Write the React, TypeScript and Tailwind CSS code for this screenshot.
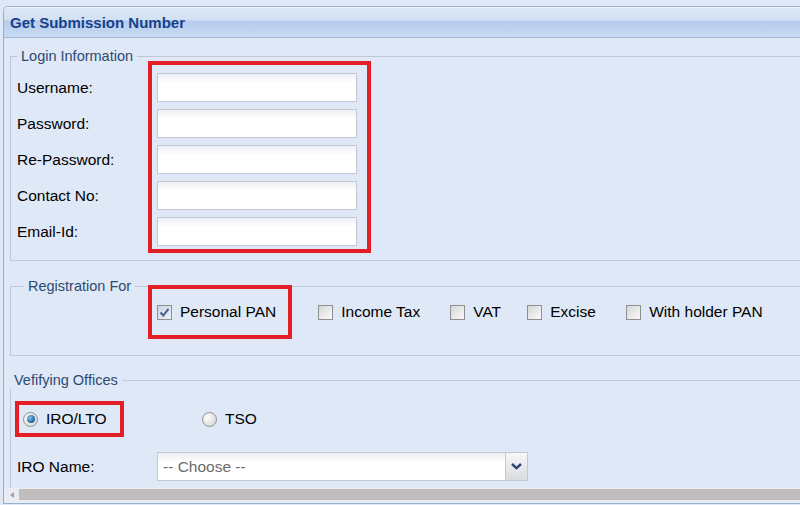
import React from "react";

const loginFields = ["Username:", "Password:", "Re-Password:", "Contact No:", "Email-Id:"];

const otherTypes = [
  { label: "Income Tax", width: "w-[132px]" },
  { label: "VAT", width: "w-[77px]" },
  { label: "Excise", width: "w-[99px]" },
  { label: "With holder PAN", width: "" },
];

function CheckBox({ checked = false }: { checked?: boolean }) {
  return (
    <span
      className={
        "flex h-[15px] w-[15px] shrink-0 items-center justify-center border border-[#8e8f8f] " +
        (checked
          ? "bg-[linear-gradient(135deg,#c9d3e3,#eef2f8)]"
          : "bg-[linear-gradient(135deg,#d6d6d6,#fafafa)]")
      }
    >
      {checked && (
        <svg width="11" height="11" viewBox="0 0 11 11">
          <path d="M1.5 5.5 L4.3 8.5 L9.5 1.8" fill="none" stroke="#4b5f8c" strokeWidth="2" />
        </svg>
      )}
    </span>
  );
}

function Radio({ checked = false }: { checked?: boolean }) {
  return (
    <span className="flex h-[15px] w-[15px] shrink-0 items-center justify-center rounded-full border border-[#8f8f8f] bg-[radial-gradient(circle_at_35%_35%,#fdfdfd,#cfcfcf)]">
      {checked && (
        <span className="h-[8px] w-[8px] rounded-full bg-[radial-gradient(circle_at_35%_35%,#8cc4ee,#1f5f99_70%)]" />
      )}
    </span>
  );
}

function TextField() {
  return (
    <div className="h-[29px] w-[200px] border border-[#c3c7d1] bg-[linear-gradient(to_bottom,#eceef2,#ffffff_9px)]" />
  );
}

export default function App() {
  return (
    <div className="h-[505px] w-[800px] overflow-hidden bg-[#dfe8f6] pl-[3px] pt-[6px] font-['Liberation_Sans',Arial,sans-serif] text-[15.5px] text-black">
      <div className="flex h-[498px] w-[830px] flex-col rounded-tl-[5px] border-b border-l border-t border-[#99afd0]">
        {/* Header */}
        <div className="flex h-[31px] shrink-0 items-center rounded-tl-[4px] border-b border-[#a4b8d8] bg-[linear-gradient(to_bottom,#ffffff_0px,#dce7f6_1px,#d3e0f3_13px,#b6ccee_14px,#c8d9f1_30px)] pl-[6px] pt-[2px]">
          <span className="text-[15px] font-bold text-[#15428b]">Get Submission Number</span>
        </div>

        {/* Body */}
        <div className="min-h-0 flex-1 overflow-hidden pl-[6px]">
          {/* Login Information */}
          <fieldset className="mt-[9px] border border-[#bfc8d6] pb-[7px] pl-[6px]">
            <legend className="px-[4px] text-[14.5px] leading-[18px] text-[#2d4a73]">Login Information</legend>
            <div className="flex items-start">
              <div className="mt-[8px] flex w-[131px] flex-col gap-[7px]">
                {loginFields.map((f) => (
                  <div key={f} className="flex h-[29px] items-center">
                    {f}
                  </div>
                ))}
              </div>
              <div className="-mt-[4px] flex flex-col gap-[7px] border-4 border-[#e41e26] pb-[3px] pl-[5px] pr-[10px] pt-[8px]">
                {loginFields.map((f) => (
                  <TextField key={f} />
                ))}
              </div>
            </div>
          </fieldset>

          {/* Registration For */}
          <fieldset className="mt-[16px] border border-[#bfc8d6] pb-[16px] pl-[6px]">
            <legend className="ml-[7px] px-[4px] text-[14.5px] leading-[18px] text-[#2d4a73]">Registration For</legend>
            <div className="flex items-center">
              <div className="-mt-[10px] ml-[131px] flex h-[54px] items-center gap-[8px] border-4 border-[#e41e26] pl-[5px] pr-[12px]">
                <CheckBox checked />
                <span>Personal PAN</span>
              </div>
              <div className="-mt-[10px] ml-[26px] flex items-center">
                {otherTypes.map((t) => (
                  <div key={t.label} className={"flex items-center gap-[8px] " + t.width}>
                    <CheckBox />
                    <span>{t.label}</span>
                  </div>
                ))}
              </div>
            </div>
          </fieldset>

          {/* Verifying Offices */}
          <fieldset className="mt-[15px] border border-[#bfc8d6] pb-[20px] pl-[6px]">
            <legend className="-ml-[7px] px-[4px] text-[14.5px] leading-[18px] text-[#2d4a73]">Vefifying Offices</legend>
            <div className="mt-[12px] flex items-center">
              <div className="-ml-[2px] flex h-[36px] w-[109px] items-center gap-[8px] border-4 border-[#e41e26] pl-[4px]">
                <Radio checked />
                <span>IRO/LTO</span>
              </div>
              <div className="ml-[78px] flex items-center gap-[8px]">
                <Radio />
                <span>TSO</span>
              </div>
            </div>
            <div className="mt-[15px] flex items-center">
              <div className="w-[140px]">IRO Name:</div>
              <div className="flex h-[29px] w-[371px]">
                <div className="flex flex-1 items-center border border-[#c3c7d1] bg-[linear-gradient(to_bottom,#eceef2,#ffffff_9px)] pl-[5px] text-[#6b6b6b]">
                  -- Choose --
                </div>
                <div className="flex w-[22px] items-center justify-center border border-l-0 border-[#c3c7d1] bg-[linear-gradient(to_bottom,#f7f7f7,#d9dbe0)]">
                  <svg width="11" height="7" viewBox="0 0 11 7">
                    <path d="M1 1 L5.5 5.2 L10 1" fill="none" stroke="#2b4577" strokeWidth="2.4" />
                  </svg>
                </div>
              </div>
            </div>
          </fieldset>
        </div>

        {/* Horizontal scrollbar */}
        <div className="flex h-[15px] shrink-0 items-start bg-[#e9edf3] pt-[1px]">
          <div className="flex h-[11px] w-[15px] items-center justify-center">
            <svg width="4" height="6" viewBox="0 0 4 6">
              <path d="M4 0 L0 3 L4 6 Z" fill="#a0a0a0" />
            </svg>
          </div>
          <div className="h-[11px] flex-1 bg-[#c1bdbd]" />
        </div>
      </div>
    </div>
  );
}
